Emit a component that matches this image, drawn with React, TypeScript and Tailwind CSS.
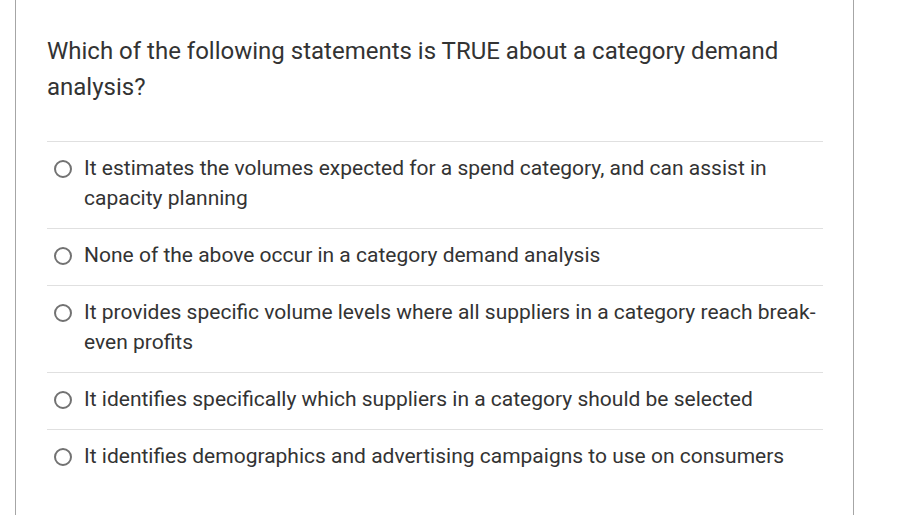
import React from "react";

const options = [
  "It estimates the volumes expected for a spend category, and can assist in capacity planning",
  "None of the above occur in a category demand analysis",
  "It provides specific volume levels where all suppliers in a category reach break-even profits",
  "It identifies specifically which suppliers in a category should be selected",
  "It identifies demographics and advertising campaigns to use on consumers",
];

export default function App() {
  return (
    <div className="h-[515px] w-[913px] overflow-hidden bg-white" style={{ fontFamily: "Roboto, 'Liberation Sans', sans-serif" }}>
      <div className="ml-[15px] h-[515px] w-[839px] border-x border-[#a6a6a6] pl-[31px] pr-[30px] pt-[33px]">
        <div className="text-[24px] leading-[36px] text-[#333333]">
          Which of the following statements is TRUE about a category demand analysis?
        </div>
        <div className="mt-[36px]">
          {options.map((o, i) => (
            <div key={i} className="flex items-start border-t border-[#e0e0e0] pb-[15px] pl-[7px] pt-[11px]">
              <div className="flex h-[30px] w-[18px] shrink-0 items-center pt-[1px]">
                <div className="h-[18px] w-[18px] rounded-full border-2 border-[#727272]" />
              </div>
              <div className="ml-[12px] text-[21px] leading-[30px] text-[#333333]">{o}</div>
            </div>
          ))}
        </div>
      </div>
    </div>
  );
}
